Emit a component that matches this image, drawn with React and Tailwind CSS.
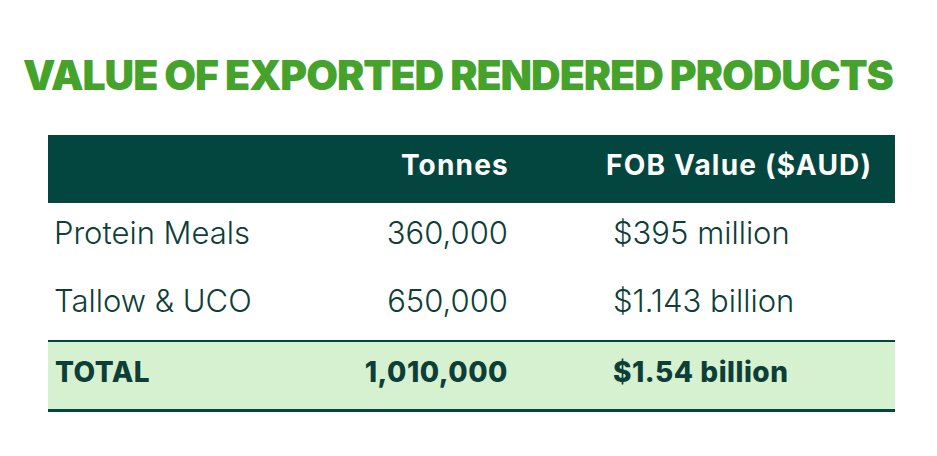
export default function App() {
  const font = { fontFamily: "Inter, 'Open Sans', sans-serif" };
  return (
    <div className="w-[937px] h-[456px] bg-white relative overflow-hidden" style={font}>
      <div className="pt-[52px] pl-[23px]">
        <h1 className="text-[41px] leading-[46px] font-black tracking-[-1.05px] text-[#45a32c] whitespace-nowrap">
          VALUE OF EXPORTED RENDERED PRODUCTS
        </h1>
      </div>
      <div className="ml-[48px] mt-[37px] w-[847px] text-[#0d3e38]">
        <div className="grid grid-cols-[300px_172px_375px] h-[68px] bg-[#03463f] text-white font-bold text-[28px] tracking-[1.2px] items-center pb-[8px]">
          <div></div>
          <div className="text-right pr-[11px]">Tonnes</div>
          <div className="pl-[86px]">FOB Value ($AUD)</div>
        </div>
        <div className="grid grid-cols-[300px_172px_375px] h-[68px] items-center text-[31px] font-light pb-[8px]">
          <div className="pl-[6px]">Protein Meals</div>
          <div className="text-right pr-[12px]">360,000</div>
          <div className="pl-[93px]">$395 million</div>
        </div>
        <div className="grid grid-cols-[300px_172px_375px] h-[69px] items-center text-[31px] font-light pb-[8px]">
          <div className="pl-[6px]">Tallow &amp; UCO</div>
          <div className="text-right pr-[12px]">650,000</div>
          <div className="pl-[93px]">$1.143 billion</div>
        </div>
        <div className="grid grid-cols-[300px_172px_375px] h-[72px] items-center text-[28px] font-extrabold tracking-[0.5px] bg-[#d6f1d0] border-t-2 border-b-[3px] border-[#03463f] pb-[7px]">
          <div className="pl-[7px]">TOTAL</div>
          <div className="text-right pr-[12px]">1,010,000</div>
          <div className="pl-[93px]">$1.54 billion</div>
        </div>
      </div>
    </div>
  );
}
